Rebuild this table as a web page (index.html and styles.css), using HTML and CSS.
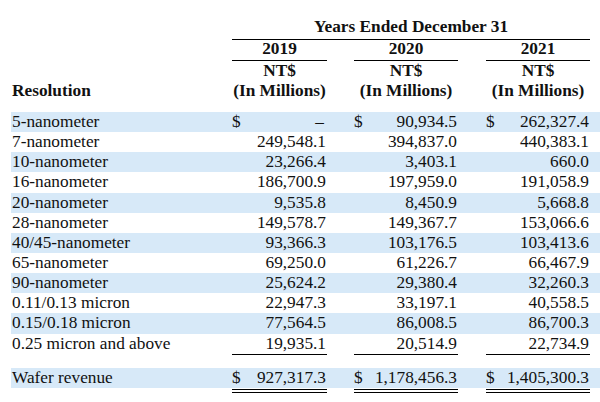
FILE: index.html
```html
<!DOCTYPE html>
<html lang="en">
<head>
<meta charset="utf-8">
<title>Wafer revenue by resolution</title>
<link rel="stylesheet" href="styles.css">
</head>
<body>
<div class="sheet">
  <div class="head">
    <div class="title">Years Ended December 31</div>
    <div class="yr c1">2019</div>
    <div class="yr c2">2020</div>
    <div class="yr c3">2021</div>
    <div class="nt c1">NT$</div>
    <div class="nt c2">NT$</div>
    <div class="nt c3">NT$</div>
    <div class="res">Resolution</div>
    <div class="mil c1">(In Millions)</div>
    <div class="mil c2">(In Millions)</div>
    <div class="mil c3">(In Millions)</div>
  </div>

  <div class="rows">
    <div class="row alt">
      <div class="lbl">5-nanometer</div>
      <div class="v c1"><span>$</span><span class="dash">–</span></div>
      <div class="v c2"><span>$</span><span>90,934.5</span></div>
      <div class="v c3"><span>$</span><span>262,327.4</span></div>
    </div>
    <div class="row">
      <div class="lbl">7-nanometer</div>
      <div class="v c1"><span></span><span>249,548.1</span></div>
      <div class="v c2"><span></span><span>394,837.0</span></div>
      <div class="v c3"><span></span><span>440,383.1</span></div>
    </div>
    <div class="row alt">
      <div class="lbl">10-nanometer</div>
      <div class="v c1"><span></span><span>23,266.4</span></div>
      <div class="v c2"><span></span><span>3,403.1</span></div>
      <div class="v c3"><span></span><span>660.0</span></div>
    </div>
    <div class="row">
      <div class="lbl">16-nanometer</div>
      <div class="v c1"><span></span><span>186,700.9</span></div>
      <div class="v c2"><span></span><span>197,959.0</span></div>
      <div class="v c3"><span></span><span>191,058.9</span></div>
    </div>
    <div class="row alt">
      <div class="lbl">20-nanometer</div>
      <div class="v c1"><span></span><span>9,535.8</span></div>
      <div class="v c2"><span></span><span>8,450.9</span></div>
      <div class="v c3"><span></span><span>5,668.8</span></div>
    </div>
    <div class="row">
      <div class="lbl">28-nanometer</div>
      <div class="v c1"><span></span><span>149,578.7</span></div>
      <div class="v c2"><span></span><span>149,367.7</span></div>
      <div class="v c3"><span></span><span>153,066.6</span></div>
    </div>
    <div class="row alt">
      <div class="lbl">40/45-nanometer</div>
      <div class="v c1"><span></span><span>93,366.3</span></div>
      <div class="v c2"><span></span><span>103,176.5</span></div>
      <div class="v c3"><span></span><span>103,413.6</span></div>
    </div>
    <div class="row">
      <div class="lbl">65-nanometer</div>
      <div class="v c1"><span></span><span>69,250.0</span></div>
      <div class="v c2"><span></span><span>61,226.7</span></div>
      <div class="v c3"><span></span><span>66,467.9</span></div>
    </div>
    <div class="row alt">
      <div class="lbl">90-nanometer</div>
      <div class="v c1"><span></span><span>25,624.2</span></div>
      <div class="v c2"><span></span><span>29,380.4</span></div>
      <div class="v c3"><span></span><span>32,260.3</span></div>
    </div>
    <div class="row">
      <div class="lbl">0.11/0.13 micron</div>
      <div class="v c1"><span></span><span>22,947.3</span></div>
      <div class="v c2"><span></span><span>33,197.1</span></div>
      <div class="v c3"><span></span><span>40,558.5</span></div>
    </div>
    <div class="row alt">
      <div class="lbl">0.15/0.18 micron</div>
      <div class="v c1"><span></span><span>77,564.5</span></div>
      <div class="v c2"><span></span><span>86,008.5</span></div>
      <div class="v c3"><span></span><span>86,700.3</span></div>
    </div>
    <div class="row last">
      <div class="lbl">0.25 micron and above</div>
      <div class="v c1"><span></span><span>19,935.1</span></div>
      <div class="v c2"><span></span><span>20,514.9</span></div>
      <div class="v c3"><span></span><span>22,734.9</span></div>
    </div>

    <div class="row alt total">
      <div class="lbl">Wafer revenue</div>
      <div class="v c1"><span>$</span><span>927,317.3</span></div>
      <div class="v c2"><span>$</span><span>1,178,456.3</span></div>
      <div class="v c3"><span>$</span><span>1,405,300.3</span></div>
    </div>
    <div class="rules">
      <div class="dbl c1"></div>
      <div class="dbl c2"></div>
      <div class="dbl c3"></div>
    </div>
  </div>
</div>
</body>
</html>
```

FILE: styles.css
```css
html, body {
  margin: 0;
  padding: 0;
  background: #ffffff;
}

body {
  font-family: "Liberation Serif", "Times New Roman", serif;
  font-size: 17.3px;
  color: #111111;
}

.sheet {
  padding: 17px 0 0 11px;
}

.head,
.row,
.rules {
  display: grid;
  grid-template-columns: 221px 95px 27px 104px 28px 104px 3px;
}

.head {
  font-weight: bold;
}

.c1 { grid-column: 2; }
.c2 { grid-column: 4; }
.c3 { grid-column: 6; }

.title {
  grid-column: 2 / 7;
  grid-row: 1;
  text-align: center;
  line-height: 20px;
  padding-bottom: 2px;
  border-bottom: 1px solid #000000;
}

.yr {
  grid-row: 2;
  text-align: center;
  line-height: 18px;
  padding-bottom: 2px;
  border-bottom: 1px solid #000000;
}

.nt {
  grid-row: 3;
  text-align: center;
  line-height: 20px;
}

.mil {
  grid-row: 4;
  text-align: center;
  line-height: 20px;
  white-space: nowrap;
}

.res {
  grid-row: 4;
  grid-column: 1;
  line-height: 20px;
  padding-left: 1px;
}

.rows {
  margin-top: 11px;
}

.row {
  height: 20.15px;
  line-height: 20px;
}

.row.alt {
  background: #d7e9f8;
}

.lbl {
  grid-column: 1;
  padding-left: 1px;
  white-space: nowrap;
}

.v {
  display: flex;
  justify-content: space-between;
  padding-right: 1px;
  white-space: nowrap;
}

.dash {
  padding-right: 2px;
}

.row.last {
  height: 21px;
}

.row.last .v {
  border-bottom: 1px solid #000000;
}

.row.total {
  margin-top: 13px;
  height: 20px;
}

.rules {
  margin-top: 1px;
}

.dbl {
  height: 2px;
  border-top: 1px solid #000000;
  border-bottom: 1px solid #000000;
}
```
